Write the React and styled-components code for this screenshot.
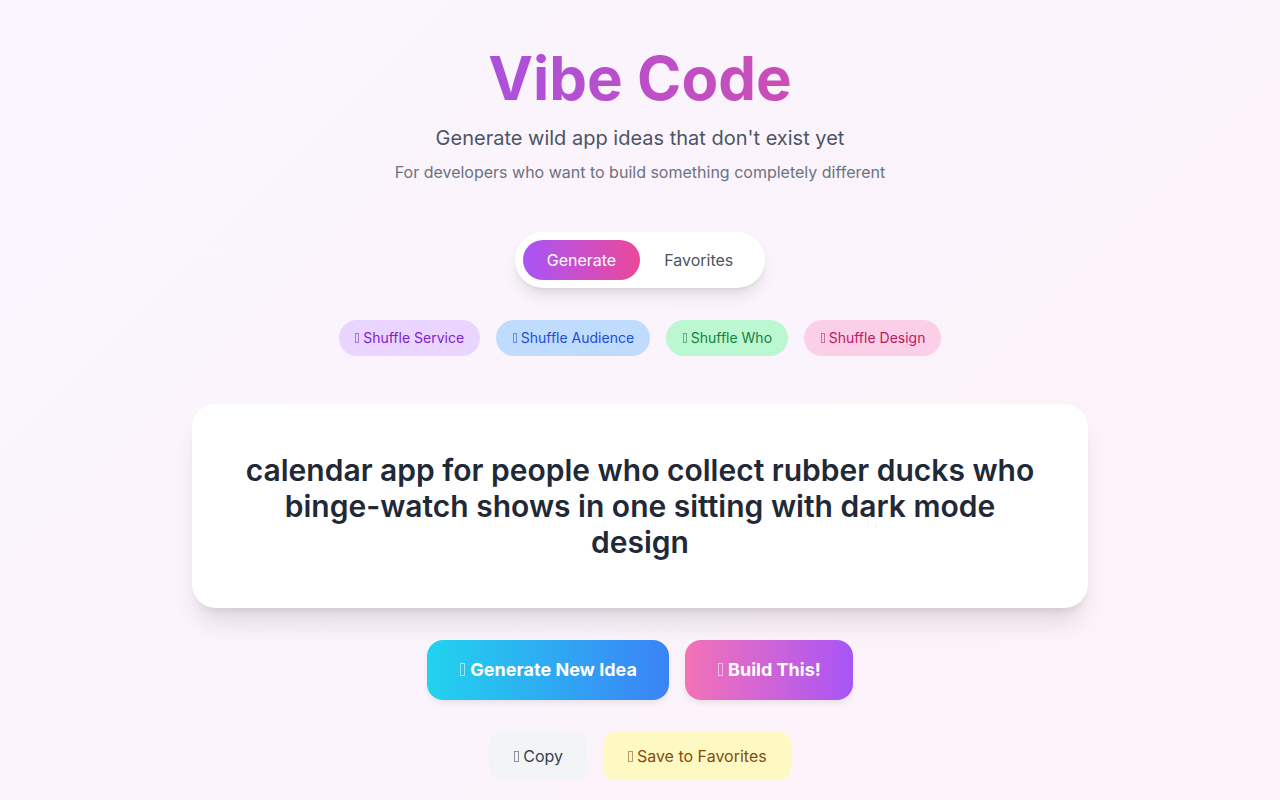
import React from "react";
import styled, { createGlobalStyle } from "styled-components";

const Global = createGlobalStyle`
  * { box-sizing: border-box; }
  html, body { margin: 0; padding: 0; }
  body {
    font-family: Inter, "Noto Sans", sans-serif;
    background: linear-gradient(135deg, #faf5ff 0%, #fdf2f8 100%);
    min-height: 100vh;
  }
`;

const Page = styled.main`
  min-height: 100vh;
  display: flex;
  flex-direction: column;
  align-items: center;
  padding: 48px 16px 40px;
`;

const Header = styled.header`
  display: flex;
  flex-direction: column;
  align-items: center;
  text-align: center;
`;

const Title = styled.h1`
  margin: 0;
  font-size: 60px;
  line-height: 60px;
  font-weight: 700;
  background: linear-gradient(to right, #ab50dc, #cb4eb6);
  -webkit-background-clip: text;
  background-clip: text;
  color: transparent;
`;

const Subtitle = styled.p`
  margin: 16px 0 0;
  font-size: 20px;
  line-height: 28px;
  color: #4b5563;
`;

const Note = styled.p`
  margin: 8px 0 0;
  font-size: 16px;
  line-height: 24px;
  color: #6b7280;
`;

/* missing-glyph box drawn in place of the emoji */
const Tofu = styled.span`
  display: inline-block;
  width: 0.3em;
  height: 0.72em;
  margin: 0 0.27em 0 0.05em;
  border: 1px solid currentColor;
  opacity: 0.55;
  vertical-align: -0.02em;
`;

const Tabs = styled.nav`
  margin-top: 48px;
  display: flex;
  padding: 8px;
  background: #ffffff;
  border-radius: 9999px;
  box-shadow: 0 10px 15px -3px rgba(0,0,0,0.1), 0 4px 6px -4px rgba(0,0,0,0.1);
`;

const Tab = styled.button`
  border: none;
  font-family: inherit;
  font-size: 16px;
  line-height: 24px;
  padding: 8px 24px;
  border-radius: 9999px;
  cursor: pointer;
  background: ${p => (p.$active ? "linear-gradient(to right, #a855f7, #ec4899)" : "transparent")};
  color: ${p => (p.$active ? "#ffffff" : "#4b5563")};
`;

const ChipRow = styled.div`
  margin-top: 32px;
  display: flex;
  gap: 16px;
  justify-content: center;
`;

const chipColors = {
  purple: ["#e9d5ff", "#7e22ce"],
  blue: ["#bfdbfe", "#1d4ed8"],
  green: ["#bbf7d0", "#15803d"],
  pink: ["#fbcfe8", "#be185d"],
};

const Chip = styled.button`
  border: none;
  font-family: inherit;
  font-size: 14px;
  line-height: 20px;
  padding: 8px 16px;
  border-radius: 9999px;
  background: ${p => chipColors[p.$tone][0]};
  color: ${p => chipColors[p.$tone][1]};
`;

const Card = styled.section`
  margin-top: 48px;
  width: 100%;
  max-width: 896px;
  background: #ffffff;
  border-radius: 24px;
  padding: 48px;
  box-shadow: 0 20px 25px -5px rgba(0,0,0,0.1), 0 8px 10px -6px rgba(0,0,0,0.1);
  text-align: center;
`;

const Idea = styled.h2`
  margin: 0;
  font-size: 30px;
  line-height: 36px;
  font-weight: 600;
  color: #1f2937;
`;

const ActionRow = styled.div`
  margin-top: 32px;
  display: flex;
  gap: 16px;
  justify-content: center;
`;

const BigButton = styled.button`
  border: none;
  font-family: inherit;
  font-size: 18px;
  line-height: 28px;
  font-weight: 700;
  color: #ffffff;
  padding: 16px 32px;
  border-radius: 16px;
  background: ${p => p.$bg};
  box-shadow: 0 4px 6px -1px rgba(0,0,0,0.08);
`;

const SmallButton = styled.button`
  border: none;
  font-family: inherit;
  font-size: 16px;
  line-height: 24px;
  padding: 12px 24px;
  border-radius: 12px;
  background: ${p => p.$bg};
  color: ${p => p.$fg};
`;

export default function App() {
  return (
    <>
      <Global />
      <Page>
        <Header>
          <Title>Vibe Code</Title>
          <Subtitle>Generate wild app ideas that don't exist yet</Subtitle>
          <Note>For developers who want to build something completely different</Note>
        </Header>

        <Tabs>
          <Tab $active>Generate</Tab>
          <Tab>Favorites</Tab>
        </Tabs>

        <ChipRow>
          <Chip $tone="purple"><Tofu />Shuffle Service</Chip>
          <Chip $tone="blue"><Tofu />Shuffle Audience</Chip>
          <Chip $tone="green"><Tofu />Shuffle Who</Chip>
          <Chip $tone="pink"><Tofu />Shuffle Design</Chip>
        </ChipRow>

        <Card>
          <Idea>
            calendar app for people who collect rubber ducks who binge-watch shows in one sitting with dark mode design
          </Idea>
        </Card>

        <ActionRow>
          <BigButton $bg="linear-gradient(to right, #22d3ee, #3b82f6)"><Tofu />Generate New Idea</BigButton>
          <BigButton $bg="linear-gradient(to right, #f472b6, #a855f7)"><Tofu />Build This!</BigButton>
        </ActionRow>

        <ActionRow>
          <SmallButton $bg="#f3f4f6" $fg="#374151"><Tofu />Copy</SmallButton>
          <SmallButton $bg="#fef9c3" $fg="#854d0e"><Tofu />Save to Favorites</SmallButton>
        </ActionRow>
      </Page>
    </>
  );
}
